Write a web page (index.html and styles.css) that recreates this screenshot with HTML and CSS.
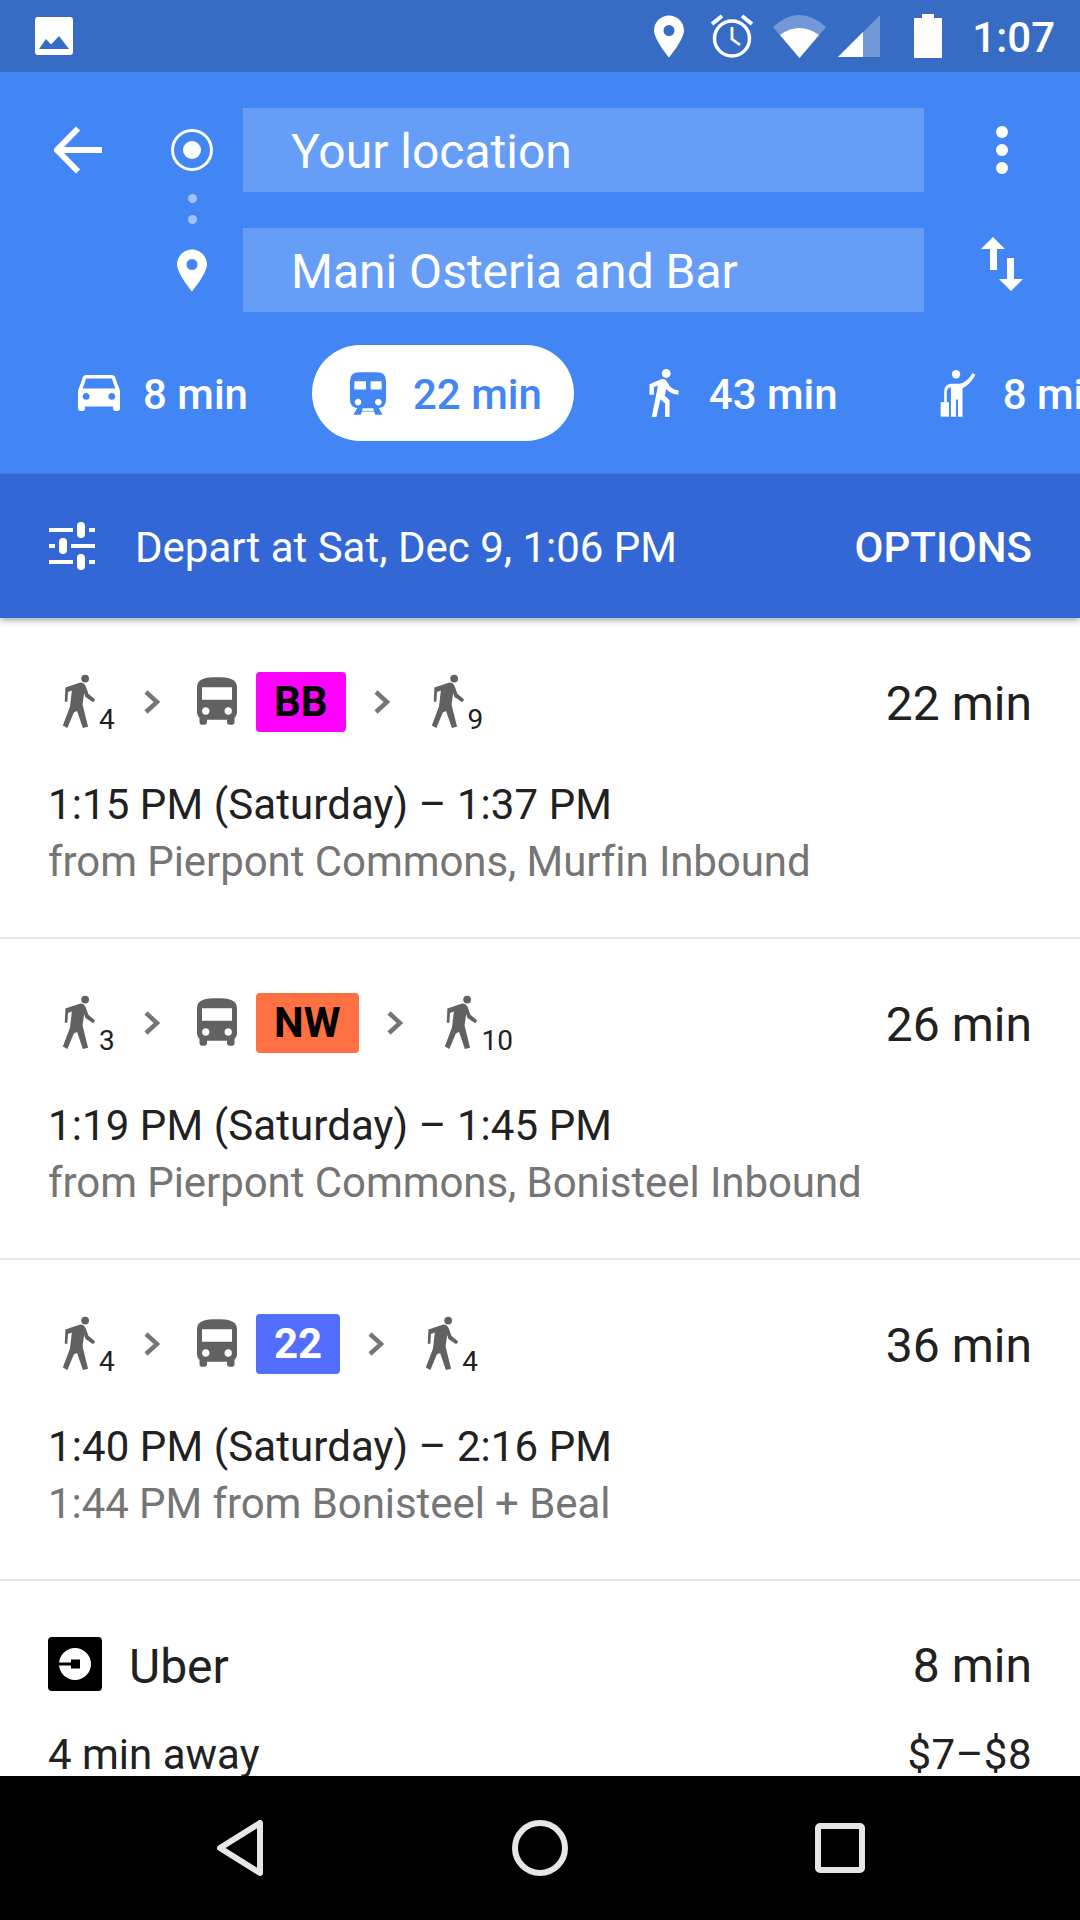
FILE: index.html
```html
<!DOCTYPE html>
<html lang="en">
  <head>
    <meta charset="utf-8" />
    <meta name="viewport" content="width=device-width, initial-scale=1.0" />
    <title>Directions</title>
    <link rel="stylesheet" href="styles.css">
  </head>

  <body>
    <svg class="defs" width="0" height="0">
      <symbol id="person" viewBox="94 71 104 170">
        <circle cx="165" cy="85" r="12" />
        <path d="M104 113 L150 97 Q162 97 167 110 L175 132 L196 150 L190 158 L166 142 L162 130 L157 165 L174 234 L158 238 L140 185 L130 190 L110 238 L96 230 L118 172 L124 122 L112 127 L110 157 L102 157 Z" />
      </symbol>
      <symbol id="chevron" viewBox="0 0 16 24">
        <path d="M2 2 L13 12 L2 22" fill="none" stroke="currentColor" stroke-width="4.500" />
      </symbol>
      <symbol id="bus" viewBox="4 2 16 19">
        <path d="M4 16c0 .88.39 1.67 1 2.22V20c0 .55.45 1 1 1h1c.55 0 1-.45 1-1v-1h8v1c0 .55.45 1 1 1h1c.55 0 1-.45 1-1v-1.78c.61-.55 1-1.34 1-2.22V6c0-3.5-3.58-4-8-4s-8 .5-8 4v10zm3.5 1c-.83 0-1.5-.67-1.5-1.5S6.67 14 7.5 14s1.5.67 1.5 1.5S8.33 17 7.5 17zm9 0c-.83 0-1.5-.67-1.5-1.5s.67-1.5 1.5-1.5 1.5.67 1.5 1.5-.67 1.5-1.5 1.5zm1.5-6H6V6h12v5z" />
      </symbol>
      <symbol id="pin" viewBox="0 0 30 42">
        <path fill-rule="evenodd" d="M15 0C7 0 0 6.500 0 15c0 9 15 27 15 27s15-18 15-27C30 6.500 23 0 15 0zm0 9.500a5.500 5.500 0 1 1 0 11 5.500 5.500 0 0 1 0-11z" />
      </symbol>
    </svg>

    <div class="phone">
      <!-- status bar -->
      <div class="statusbar">
        <svg class="ic-photo" viewBox="0 0 38 38">
          <path fill-rule="evenodd" d="M3 0h32a3 3 0 0 1 3 3v32a3 3 0 0 1-3 3H3a3 3 0 0 1-3-3V3a3 3 0 0 1 3-3zM4 32 11 22 16 27.500 24 19 34 32Z" />
        </svg>
        <div class="status-right">
          <svg class="ic-sb-pin"><use href="#pin" /></svg>
          <svg class="ic-alarm" viewBox="0 0 42 44">
            <circle cx="21" cy="24.500" r="17.500" fill="none" stroke="#fff" stroke-width="3.500" />
            <path d="M21 13v12l8 6" fill="none" stroke="#fff" stroke-width="2.800" />
            <path d="M1 10 11 2M41 10 31 2" fill="none" stroke="#fff" stroke-width="4" />
          </svg>
          <svg class="ic-wifi" viewBox="0 0 53 43">
            <path d="M0 12Q26-12 53 12L26.500 43Z" fill="#fff" opacity=".3" />
            <path d="M7 20Q26 6 46 20L26.500 43Z" fill="#fff" />
          </svg>
          <svg class="ic-signal" viewBox="0 0 42 42">
            <path d="M42 0V42H0Z" fill="#fff" opacity=".3" />
            <path d="M25 17V42H0Z" fill="#fff" />
          </svg>
          <svg class="ic-battery" viewBox="0 0 28 44">
            <path d="M8 0h12v4h8v40H0V4h8z" fill="#fff" />
          </svg>
          <span class="clock">1:07</span>
        </div>
      </div>

      <!-- blue header with the two places -->
      <header class="header">
        <div class="places">
          <svg class="ic-back" viewBox="0 0 48 48">
            <path d="M48 24H4M24 2.500 3 24l21 21.500" fill="none" stroke="#fff" stroke-width="6" />
          </svg>
          <div class="route-marks">
            <svg class="ic-origin" viewBox="0 0 42 42">
              <circle cx="21" cy="21" r="19.500" fill="none" stroke="#fff" stroke-width="3" />
              <circle cx="21" cy="21" r="9" fill="#fff" />
            </svg>
            <i class="dot"></i>
            <i class="dot"></i>
            <svg class="ic-dest"><use href="#pin" /></svg>
          </div>
          <div class="fields">
            <div class="field">Your location</div>
            <div class="field">Mani Osteria and Bar</div>
          </div>
          <div class="actions">
            <svg class="ic-more" viewBox="0 0 12 48">
              <circle cx="6" cy="6" r="6" />
              <circle cx="6" cy="24" r="6" />
              <circle cx="6" cy="42" r="6" />
            </svg>
            <svg class="ic-swap" viewBox="0 0 42 54">
              <path d="M12 0 24 12H16V33H9V12H0ZM30 54 18 42H26V21H33V42H42Z" />
            </svg>
          </div>
        </div>

        <nav class="modes">
          <div class="mode">
            <svg class="ic-car" viewBox="3 5 18 16" preserveAspectRatio="none">
              <path d="M18.920 6.010C18.720 5.420 18.160 5 17.500 5h-11c-.66 0-1.210.42-1.420 1.010L3 12v8c0 .55.45 1 1 1h1c.55 0 1-.45 1-1v-1h12v1c0 .55.45 1 1 1h1c.55 0 1-.45 1-1v-8l-2.080-5.990zM6.500 16c-.83 0-1.500-.67-1.500-1.500S5.670 13 6.500 13s1.500.67 1.500 1.500S7.330 16 6.500 16zm11 0c-.83 0-1.500-.67-1.500-1.500s.67-1.500 1.500-1.500 1.500.67 1.500 1.500-.67 1.500-1.500 1.500zM5 11l1.500-4.500h11L19 11H5z" />
            </svg>
            <span>8 min</span>
          </div>
          <div class="mode selected">
            <svg class="ic-train" viewBox="0 0 108 128">
              <path fill-rule="evenodd" d="M27 0H81Q108 0 108 27V83Q108 108 83 108H25Q0 108 0 83V27Q0 0 27 0ZM13 27V52H48V27ZM62 27V52H95V27ZM24 80a10 10 0 1 0 .1 0ZM85 80a10 10 0 1 0 .1 0Z" />
              <path d="M24 104 10 128H32L36 118H72L76 128H98L84 104Z" />
              <path d="M38 108H70L72 116H36Z" fill="#fff" />
            </svg>
            <span>22 min</span>
          </div>
          <div class="mode">
            <svg class="ic-walk" viewBox="4.500 1.500 16 21.500">
              <path d="M13.500 5.500c1.100 0 2-.9 2-2s-.9-2-2-2-2 .9-2 2 .9 2 2 2zM9.800 8.900L7 23h2.100l1.800-8 2.100 2v6h2v-7.500l-2.100-2 .6-3C14.800 12 16.800 13 19 13v-2c-1.900 0-3.500-1-4.300-2.400l-1-1.600c-.4-.6-1-1-1.700-1-.3 0-.5.1-.8.1L6 8.300V13h2V9.600l1.800-.7" />
            </svg>
            <span>43 min</span>
          </div>
          <div class="mode">
            <svg class="ic-hail" viewBox="925 54 112 148">
              <circle cx="975" cy="68" r="13" />
              <path d="M938 155V120Q940 100 958 98H985Q1012 92 1026 64L1035 70Q1020 100 995 112V200H981V147H975V200H959V108Q950 110 946 120V155Z" />
              <rect x="927" y="155" width="26" height="45" />
            </svg>
            <span>8 min</span>
          </div>
        </nav>
      </header>

      <!-- depart time -->
      <div class="depart">
        <svg class="ic-tune" viewBox="0 0 47 48">
          <path d="M1 6h24v4H1zM41 6h6v4h-6zM1 22h6v4H1zM23 22h24v4H23zM1 38h24v4H1zM41 38h6v4h-6z" />
          <rect x="29" y="0" width="8" height="16" rx="4" />
          <rect x="11" y="16" width="8" height="16" rx="4" />
          <rect x="29" y="32" width="8" height="16" rx="4" />
        </svg>
        <span class="depart-text">Depart at Sat, Dec 9, 1:06 PM</span>
        <span class="options">OPTIONS</span>
      </div>

      <section class="list">
        <article class="route">
          <div class="route-top">
            <div class="legs">
              <div class="walk"><svg class="ic-person"><use href="#person" /></svg><sub>4</sub></div>
              <svg class="ic-chev"><use href="#chevron" /></svg>
              <svg class="ic-bus"><use href="#bus" /></svg>
              <b class="badge bb">BB</b>
              <svg class="ic-chev"><use href="#chevron" /></svg>
              <div class="walk"><svg class="ic-person"><use href="#person" /></svg><sub>9</sub></div>
            </div>
            <span class="duration">22 min</span>
          </div>
          <p class="times">1:15 PM (Saturday) – 1:37 PM</p>
          <p class="from">from Pierpont Commons, Murfin Inbound</p>
        </article>

        <article class="route">
          <div class="route-top">
            <div class="legs">
              <div class="walk"><svg class="ic-person"><use href="#person" /></svg><sub>3</sub></div>
              <svg class="ic-chev"><use href="#chevron" /></svg>
              <svg class="ic-bus"><use href="#bus" /></svg>
              <b class="badge nw">NW</b>
              <svg class="ic-chev"><use href="#chevron" /></svg>
              <div class="walk"><svg class="ic-person"><use href="#person" /></svg><sub>10</sub></div>
            </div>
            <span class="duration">26 min</span>
          </div>
          <p class="times">1:19 PM (Saturday) – 1:45 PM</p>
          <p class="from">from Pierpont Commons, Bonisteel Inbound</p>
        </article>

        <article class="route">
          <div class="route-top">
            <div class="legs">
              <div class="walk"><svg class="ic-person"><use href="#person" /></svg><sub>4</sub></div>
              <svg class="ic-chev"><use href="#chevron" /></svg>
              <svg class="ic-bus"><use href="#bus" /></svg>
              <b class="badge n22">22</b>
              <svg class="ic-chev"><use href="#chevron" /></svg>
              <div class="walk"><svg class="ic-person"><use href="#person" /></svg><sub>4</sub></div>
            </div>
            <span class="duration">36 min</span>
          </div>
          <p class="times">1:40 PM (Saturday) – 2:16 PM</p>
          <p class="from">1:44 PM from Bonisteel + Beal</p>
        </article>

        <article class="uber">
          <div class="uber-top">
            <svg class="ic-uber" viewBox="0 0 54 54">
              <rect width="54" height="54" rx="4" />
              <circle cx="27" cy="27" r="16" fill="#fff" />
              <rect x="23" y="22.500" width="9" height="9" />
              <rect x="10" y="25.500" width="14" height="3" />
            </svg>
            <span class="uber-name">Uber</span>
            <span class="duration">8 min</span>
          </div>
          <div class="uber-bottom">
            <span>4 min away</span>
            <span class="price">$7–$8</span>
          </div>
        </article>
      </section>

      <!-- android buttons -->
      <footer class="navbar">
        <svg class="ic-nav" viewBox="0 0 56 56">
          <path d="M48 3V53L8 28Z" />
        </svg>
        <svg class="ic-nav" viewBox="0 0 56 56">
          <circle cx="28" cy="28" r="25" />
        </svg>
        <svg class="ic-nav" viewBox="0 0 56 56">
          <rect x="6" y="6" width="44" height="44" rx="2" />
        </svg>
      </footer>
    </div>
  </body>
</html>
```

FILE: styles.css
```css
* {
  box-sizing: border-box;
}

html,
body {
  margin: 0;
  padding: 0;
}

body {
  font-family: Roboto, "Noto Sans", sans-serif;
  background-color: #fff;
  color: #212121;
}

.defs {
  display: block;
  height: 0;
}

.phone {
  width: 1080px;
  height: 1920px;
  display: flex;
  flex-direction: column;
  overflow: hidden;
}

svg {
  display: block;
  flex: none;
  fill: currentColor;
}

/* status bar */
.statusbar {
  height: 72px;
  flex: none;
  display: flex;
  align-items: center;
  justify-content: space-between;
  padding: 0 25px 0 35px;
  background-color: #366cc3;
  color: #fff;
}

.ic-photo {
  width: 38px;
  height: 38px;
}

.status-right {
  display: flex;
  align-items: center;
}

.ic-sb-pin {
  width: 30px;
  height: 43px;
  margin-right: 27px;
}

.ic-alarm {
  width: 42px;
  height: 44px;
  margin-right: 20px;
}

.ic-wifi {
  width: 53px;
  height: 43px;
  margin-right: 12px;
}

.ic-signal {
  width: 42px;
  height: 42px;
  margin-right: 34px;
}

.ic-battery {
  width: 28px;
  height: 44px;
  margin-right: 30px;
}

.clock {
  padding-top: 3px;
  font-size: 42px;
  font-weight: 500;
  line-height: 44px;
}

/* header */
.header {
  height: 402px;
  flex: none;
  background-color: #4285f4;
  color: #fff;
  overflow: hidden;
}

.places {
  display: flex;
  height: 273px;
  padding-top: 36px;
}

.ic-back {
  width: 48px;
  height: 48px;
  margin: 18px 0 0 54px;
}

.route-marks {
  width: 42px;
  margin: 21px 0 0 69px;
  display: flex;
  flex-direction: column;
  align-items: center;
}

.ic-origin {
  width: 42px;
  height: 42px;
  margin-bottom: 23px;
}

.dot {
  width: 9px;
  height: 9px;
  margin-bottom: 12px;
  border-radius: 50%;
  background-color: #a1c2fa;
}

.ic-dest {
  width: 30px;
  height: 43px;
  margin-top: 13px;
}

.fields {
  width: 681px;
  margin-left: 30px;
  display: flex;
  flex-direction: column;
  gap: 36px;
}

.field {
  height: 84px;
  padding-left: 48px;
  background-color: #669df6;
  font-size: 48px;
  line-height: 88px;
}

.actions {
  flex: 1;
  display: flex;
  flex-direction: column;
  align-items: center;
  padding-top: 18px;
}

.ic-more {
  width: 12px;
  height: 48px;
}

.ic-swap {
  width: 42px;
  height: 54px;
  margin-top: 63px;
}

.modes {
  display: flex;
  gap: 32px;
  padding-left: 40px;
  height: 96px;
}

.mode {
  height: 96px;
  flex: none;
  display: flex;
  align-items: center;
  gap: 27px;
  padding: 0 32px 0 38px;
  border-radius: 48px;
  font-size: 42px;
  font-weight: 500;
}

.mode span {
  padding-top: 3px;
}

.mode.selected {
  margin-right: 2px;
  background-color: #fff;
  color: #4285f4;
}

.ic-car {
  width: 42px;
  height: 36px;
  margin-right: -4px;
}

.ic-train {
  width: 36px;
  height: 43px;
}

.ic-walk {
  width: 36px;
  height: 48px;
}

.ic-hail {
  width: 36px;
  height: 49px;
}

/* depart bar */
.depart {
  height: 144px;
  flex: none;
  display: flex;
  align-items: center;
  padding: 0 48px;
  background-color: #3367d6;
  color: #fff;
  box-shadow: 0 3px 6px rgba(0, 0, 0, 0.3);
  position: relative;
  font-size: 42px;
}

.ic-tune {
  width: 47px;
  height: 48px;
  margin-right: 40px;
}

.depart-text {
  flex: 1;
  padding-top: 2px;
}

.options {
  padding-top: 2px;
  font-weight: 500;
}

/* route list */
.list {
  flex: 1;
  overflow: hidden;
}

.route {
  height: 321px;
  padding: 0 48px;
  border-bottom: 2px solid #e8e8e8;
}

.route-top {
  height: 158px;
  padding-top: 54px;
  display: flex;
  justify-content: space-between;
}

.legs {
  display: flex;
  align-items: flex-start;
  margin-left: 10px;
  color: #616161;
}

.walk {
  display: flex;
  width: 86px;
  padding-left: 4px;
}

.ic-person {
  width: 34px;
  height: 55px;
  margin-top: 2px;
}

.walk sub {
  font-size: 28px;
  line-height: 28px;
  color: #212121;
  margin: 34px 0 0 3px;
  vertical-align: baseline;
}

.ic-chev {
  width: 16px;
  height: 24px;
  margin: 18px 37px 0 0;
  color: #757575;
}

.ic-bus {
  width: 40px;
  height: 48px;
  margin: 5px 19px 0 0;
}

.badge {
  height: 60px;
  padding: 0 18px;
  margin-right: 28px;
  border-radius: 4px;
  font-size: 42px;
  font-weight: 700;
  line-height: 60px;
  color: #000;
}

.bb {
  background-color: #ff00ff;
}

.nw {
  padding: 0 19px 0 18px;
  background-color: #ff7043;
}

.n22 {
  background-color: #536dfe;
  color: #fff;
}

.duration {
  font-size: 48px;
  line-height: 64px;
}

.times,
.from {
  margin: 0;
  font-size: 42px;
  line-height: 57px;
  white-space: nowrap;
}

.times {
  letter-spacing: 0.09px;
}

.from {
  color: #757575;
  letter-spacing: -0.07px;
}

.uber {
  padding: 0 48px;
}

.uber-top {
  height: 110px;
  margin-bottom: 36px;
  padding-top: 56px;
  display: flex;
  align-items: center;
}

.uber-top span {
  padding-top: 4px;
}

.ic-uber {
  width: 54px;
  height: 54px;
  margin-right: 27px;
  color: #000;
}

.uber-name {
  flex: 1;
  font-size: 48px;
}

.uber-bottom {
  display: flex;
  justify-content: space-between;
  font-size: 42px;
  line-height: 56px;
}

.price {
  letter-spacing: 0.5px;
}

/* android nav */
.navbar {
  height: 144px;
  flex: none;
  display: flex;
  justify-content: center;
  align-items: center;
  gap: 244px;
  background-color: #000;
}

.ic-nav {
  width: 56px;
  height: 56px;
  fill: none;
  stroke: #e6e6e6;
  stroke-width: 6;
  stroke-linejoin: round;
}
```
